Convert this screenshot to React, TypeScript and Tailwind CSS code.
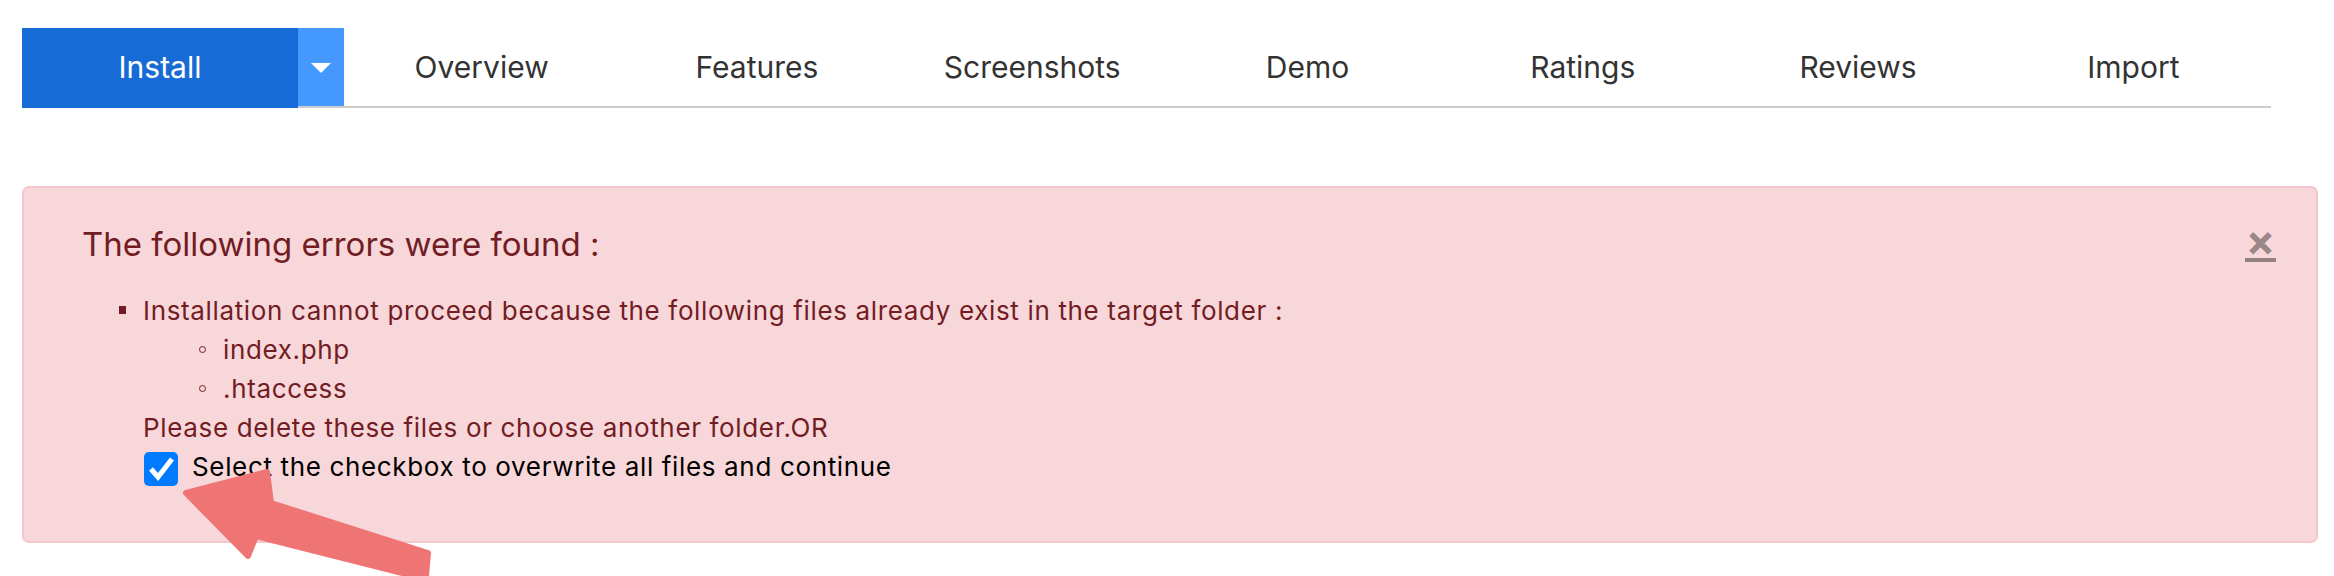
import { useState } from "react";

const TABS = ["Overview", "Features", "Screenshots", "Demo", "Ratings", "Reviews", "Import"];

function Caret() {
  return (
    <svg width="20" height="10" viewBox="0 0 20 10" aria-hidden="true">
      <polygon points="0,0 20,0 10,10" fill="#ffffff" />
    </svg>
  );
}

function Arrow() {
  // annotation arrow pointing at the checkbox; lies over the alert
  return (
    <svg
      className="pointer-events-none absolute left-[170px] top-[460px]"
      width="280"
      height="116"
      viewBox="170 460 280 116"
      aria-hidden="true"
    >
      <polygon
        points="186,493 267,472 271,503 428,553 426,576 414,576 256,536 248,556"
        fill="#ef7575"
        stroke="#ef7575"
        strokeWidth="6"
        strokeLinejoin="round"
      />
    </svg>
  );
}

export default function App() {
  const [overwrite, setOverwrite] = useState(true);

  return (
    <div className="relative h-[576px] overflow-hidden bg-white font-[Inter,sans-serif]">
      <nav className="flex pl-[22px] pt-[28px] pr-[63px]">
        <button className="flex h-[80px] w-[276px] shrink-0 items-center justify-center bg-[#176bd6] pb-[2px] text-[30px] text-white">
          Install
        </button>
        <div className="flex flex-1 border-b-2 border-[#cccccc]">
          <button className="flex h-[78px] w-[46px] shrink-0 items-center justify-center bg-[#4598fe] pt-[2px]">
            <Caret />
          </button>
          {TABS.map((t) => (
            <a key={t} className="flex flex-1 items-center justify-center text-[30px] text-[#333333]">
              {t}
            </a>
          ))}
        </div>
      </nav>

      <div className="ml-[22px] mr-[16px] mt-[78px] rounded-[7px] border-2 border-[#f5c6cb] bg-[#f8d7da] pb-[55px] pl-[58px] pr-[40px] pt-[34px] text-[#721c24]">
        <div className="flex items-start justify-between">
          <h4 className="text-[33px] leading-[44px]">The following errors were found :</h4>
          <button className="mt-[-4px] flex flex-col items-center text-black/40">
            <span className="text-[44px] font-bold leading-[44px]">×</span>
            <span className="mt-[-4px] h-[4px] w-[31px] bg-black/40" />
          </button>
        </div>

        <div className="mt-[25px] flex items-start pl-[37px] text-[26px] leading-[39px] tracking-[0.65px]">
          <span className="mt-[15px] h-[8px] w-[7px] shrink-0 bg-[#721c24]" />
          <div className="ml-[17px]">
            <p>Installation cannot proceed because the following files already exist in the target folder :</p>
            <ul>
              {["index.php", ".htaccess"].map((f) => (
                <li key={f} className="flex items-center pl-[56px]">
                  <span className="h-[7px] w-[7px] shrink-0 rounded-full border border-[#721c24]" />
                  <span className="ml-[17px]">{f}</span>
                </li>
              ))}
            </ul>
            <p>Please delete these files or choose another folder.OR</p>
            <label className="flex items-start text-black">
              <span
                onClick={() => setOverwrite(!overwrite)}
                className="ml-[1px] mt-[5px] flex h-[34px] w-[34px] shrink-0 items-center justify-center rounded-[5px] bg-[#007bff]"
              >
                {overwrite ? (
                  <svg width="34" height="34" viewBox="0 0 34 34" aria-hidden="true">
                    <polyline
                      points="7,17 14,25 28,7"
                      fill="none"
                      stroke="#ffffff"
                      strokeWidth="5"
                      strokeLinejoin="miter"
                    />
                  </svg>
                ) : null}
              </span>
              <span className="ml-[14px]">Select the checkbox to overwrite all files and continue</span>
            </label>
          </div>
        </div>
      </div>

      <Arrow />
    </div>
  );
}
